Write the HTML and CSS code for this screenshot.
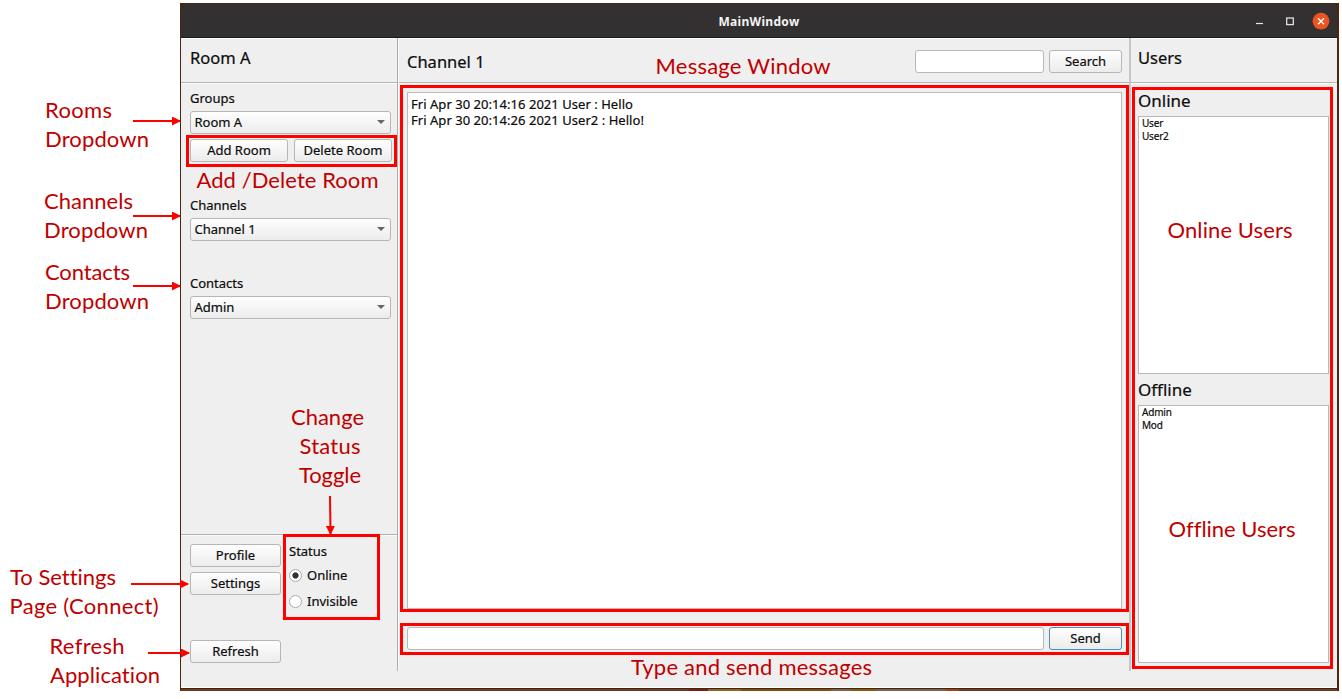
FILE: index.html
```html
<!DOCTYPE html>
<html lang="en">
<head>
<meta charset="utf-8">
<title>MainWindow</title>
<link rel="stylesheet" href="styles.css">
</head>
<body>
<div class="window">
  <header class="titlebar">
    <span class="title">MainWindow</span>
    <svg class="controls" width="90" height="34" viewBox="0 0 90 34">
      <path d="M9 19.500h7" stroke="#e8e8e8" stroke-width="1.200"/>
      <rect x="39.700" y="14" width="6.600" height="6.600" fill="none" stroke="#e0e0e0" stroke-width="1.300"/>
      <circle cx="74" cy="17.200" r="8.400" fill="#e95420"/>
      <path d="M71 14.200l6 6M77 14.200l-6 6" stroke="#fff" stroke-width="1.400"/>
    </svg>
  </header>
  <main class="content">
    <section class="left">
      <div class="head">Room A</div>
      <div class="rooms">
        <div class="label">Groups</div>
        <div class="combo"><span>Room A</span><i></i></div>
        <div class="pair"><button class="btn">Add Room</button><button class="btn">Delete Room</button></div>
        <div class="label label-channels">Channels</div>
        <div class="combo"><span>Channel 1</span><i></i></div>
        <div class="label label-contacts">Contacts</div>
        <div class="combo"><span>Admin</span><i></i></div>
      </div>
      <div class="bottom">
        <div class="actions">
          <button class="btn">Profile</button>
          <button class="btn">Settings</button>
          <button class="btn refresh">Refresh</button>
        </div>
        <div class="status">
          <div class="label">Status</div>
          <div class="radio"><i class="dot on"></i><span>Online</span></div>
          <div class="radio"><i class="dot"></i><span>Invisible</span></div>
        </div>
      </div>
    </section>
    <div class="vline"></div>
    <section class="middle">
      <div class="head chan"><span class="name">Channel 1</span><div class="field search"></div><button class="btn">Search</button></div>
      <div class="chat">
        <div class="messages"><div>Fri Apr 30 20:14:16 2021 User : Hello</div><div>Fri Apr 30 20:14:26 2021 User2 : Hello!</div></div>
        <div class="compose"><div class="field"></div><button class="btn send">Send</button></div>
      </div>
    </section>
    <div class="vline soft"></div>
    <section class="right">
      <div class="head">Users</div>
      <div class="people">
        <div class="group">Online</div>
        <div class="list"><div>User</div><div>User2</div></div>
        <div class="group second">Offline</div>
        <div class="list"><div>Admin</div><div>Mod</div></div>
      </div>
    </section>
  </main>
  <div class="strip"></div>
</div>
<svg class="notes" width="1342" height="699" viewBox="0 0 1342 699">
  <defs><marker id="tip" markerUnits="userSpaceOnUse" markerWidth="9" markerHeight="9" refX="8" refY="4.500" orient="auto"><path d="M0 0L9 4.500L0 9z" fill="#f00"/></marker></defs>
  <g class="box">
    <rect x="187.500" y="136.500" width="208" height="29"/>
    <rect x="401.500" y="86.500" width="726" height="524"/>
    <rect x="401.500" y="624.500" width="726" height="29"/>
    <rect x="1133.500" y="88.500" width="198" height="579"/>
    <rect x="284.500" y="535.500" width="94" height="83"/>
  </g>
  <g class="arrow">
    <path d="M133 121H180"/><path d="M133 216H180"/><path d="M133 286H180"/>
    <path d="M131 584H188"/><path d="M148 653H189"/><path d="M330 496L330.500 534"/>
  </g>
  <g class="txt">
    <text x="45" y="118" textLength="67">Rooms</text>
    <text x="45" y="147" textLength="104">Dropdown</text>
    <text x="44" y="209" textLength="89">Channels</text>
    <text x="44" y="238" textLength="104">Dropdown</text>
    <text x="45" y="280" textLength="85">Contacts</text>
    <text x="45" y="309" textLength="104">Dropdown</text>
    <text x="196.500" y="188" textLength="182">Add /Delete Room</text>
    <text x="291" y="425" textLength="73">Change</text>
    <text x="299.500" y="454" textLength="61">Status</text>
    <text x="299" y="483" textLength="62">Toggle</text>
    <text x="10" y="585" textLength="106">To Settings</text>
    <text x="9.500" y="614" textLength="149">Page (Connect)</text>
    <text x="49.500" y="654" textLength="75">Refresh</text>
    <text x="50" y="683" textLength="110">Application</text>
    <text x="655.500" y="74" textLength="175">Message Window</text>
    <text x="631" y="675" textLength="241">Type and send messages</text>
    <text x="1167.500" y="238" textLength="125">Online Users</text>
    <text x="1168.500" y="537" textLength="127">Offline Users</text>
  </g>
</svg>
</body>
</html>
```
FILE: styles.css
```css
* { box-sizing: border-box; }
body { margin: 0; width: 1342px; height: 699px; padding: 3px 0 0 180px; background: #fff; overflow: hidden; font: 13px/16px "Noto Sans", "Open Sans", sans-serif; color: #0c0c0c; font-variant-ligatures: none; -webkit-text-stroke: 0.2px; }
.window { width: 1159px; height: 688px; padding: 1px 2px 0 1px; background: #4b2412; display: flex; flex-direction: column; }
.titlebar { height: 34px; flex: none; background: #323030; border-bottom: 1px solid #1c1b1b; border-radius: 6px 6px 0 0; display: grid; grid-template-columns: 90px 1fr 90px; align-items: center; color: #f4f4f4; }
.title { grid-column: 2; text-align: center; font-weight: 700; font-size: 12px; padding: 2px 0 0; letter-spacing: 0.3px; -webkit-text-stroke: 0; }
.content { flex: 1; min-height: 0; background: #efefef; border-bottom: 1px solid #fff; display: grid; grid-template-columns: 216px 2px 730px 2px 1fr; }
.left, .middle, .right { display: flex; flex-direction: column; min-width: 0; }
.vline { height: 633px; background: linear-gradient(90deg, #adadad 50%, #fafafa 50%); }
.soft { background: #c6c6c6; }
.head { height: 46px; flex: none; padding: 8px 9px 0; font-size: 16.500px; line-height: 22px; border-top: 1px solid #fafafa; background: linear-gradient(#b5b5b5, #b5b5b5) 0 43px / 100% 1px no-repeat, linear-gradient(#fafafa, #fafafa) 0 44px / 100% 1px no-repeat; }
.right .head { padding-left: 7px; }
.chan { display: flex; gap: 5px; padding: 11px 7px 0 8px; }
.name { flex: 1; padding-top: 1px; }
.btn { height: 23px; margin: 0; padding: 0 0 1px; border: 1px solid #b6b6b6; border-radius: 3px; background: linear-gradient(#fefefe, #ececec); font: inherit; font-size: 13px; line-height: 16px; color: inherit; text-align: center; }
.chan .btn, .compose .btn { width: 73px; flex: none; }
.field { height: 23px; flex: 1; background: #fff; border: 1px solid #b8b8b8; border-radius: 3px; }
.search { flex: 0 0 129px; }
.rooms { height: 450px; padding: 6px 6px 0 9px; }
.label { height: 16px; }
.combo { height: 23px; margin-top: 5px; padding: 0 5px 1px 4px; display: flex; align-items: center; justify-content: space-between; border: 1px solid #b6b6b6; border-radius: 3px; background: linear-gradient(#fefefe, #ececec); }
.combo span { margin-left: -0.500px; }
.combo i { border: 4px solid transparent; border-top-color: #666; border-bottom: 0; }
.pair { display: grid; grid-template-columns: 98px 98px; gap: 6px; margin-top: 5px; width: 202px; }
.pair .btn { white-space: nowrap; }
.label-channels { margin-top: 35px; }
.label-contacts { margin-top: 34px; }
.bottom { border-top: 1px solid #b0b0b0; box-shadow: inset 0 1px #fafafa; display: flex; gap: 8px; padding: 9px 9px 0; }
.actions { width: 91px; display: flex; flex-direction: column; gap: 5px; }
.refresh { margin-top: 40px; }
.status .label { margin-top: -1px; }
.radio { display: flex; align-items: center; gap: 5px; height: 16px; margin-top: 8px; }
.radio + .radio { margin-top: 10px; }
.dot { width: 13px; height: 13px; border: 1px solid #aaa; border-radius: 50%; background: #fff; }
.on { background: radial-gradient(circle, #333 0 2.700px, #fff 3.500px); }
.chat { padding: 8px 7px 0 8px; }
.messages { height: 517px; padding: 4px 3px; background: #fff; border: 1px solid #bbb; line-height: 15.500px; letter-spacing: 0.040px; }
.compose { display: flex; gap: 5px; margin-top: 18px; }
.send { border-color: #4f8fb3; }
.people { padding: 7px 8px 0 7px; }
.group { font-size: 17px; line-height: 20px; }
.second { margin-top: 6px; }
.list { height: 258px; margin-top: 5px; padding: 0 3px; border: 1px solid #b8b8b8; background: #fff; font-size: 10px; letter-spacing: -0.2px; line-height: 12.600px; }
.strip { height: 3px; flex: none; background: linear-gradient(#3a281c 33%, transparent 33%), linear-gradient(90deg, #713a18 0 508px, #801c14 508px 527px, #93651c 527px 560px, #8a4a0c 560px 650px, #806047 650px 670px, #91550c 670px 695px, #81604a 695px 765px, #a04412 765px 778px, #713a18 778px); }
.notes { position: absolute; left: 0; top: 0; -webkit-text-stroke: 0; }
.box { fill: none; stroke: #f00; stroke-width: 3px; }
.arrow path { fill: none; stroke: #f00; stroke-width: 2px; marker-end: url(#tip); }
.txt { fill: #c00000; font: 22px Lato, sans-serif; font-variant-ligatures: none; }
```
